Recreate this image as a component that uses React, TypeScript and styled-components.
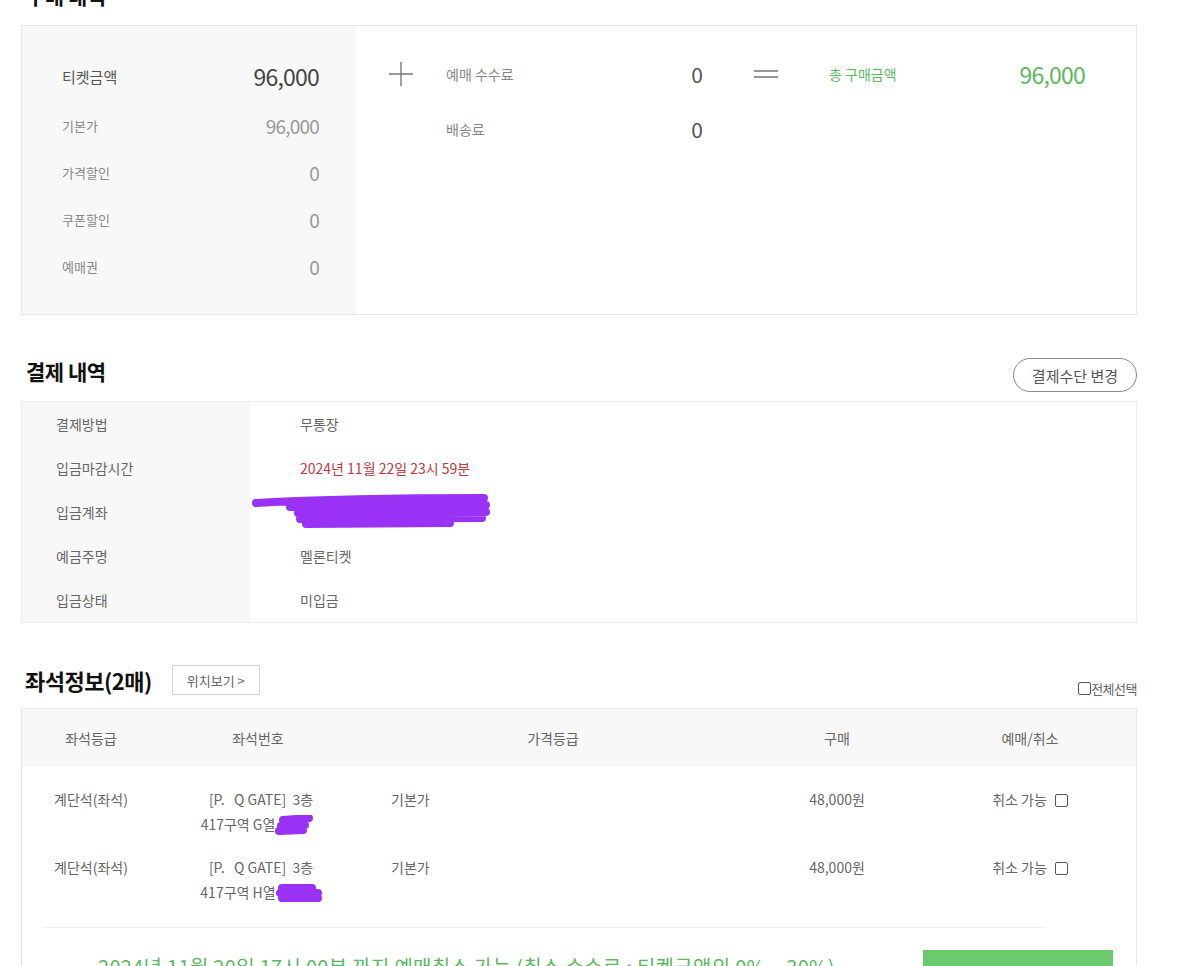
import React from "react";
import styled, { createGlobalStyle } from "styled-components";

const GlobalStyle = createGlobalStyle`
  * { box-sizing: border-box; }
  body {
    margin: 0;
    background: #fff;
    font-family: "Noto Sans CJK KR", "Noto Sans", sans-serif;
    color: #666;
  }
`;

const GREEN = "#5cb85f";

const Page = styled.div`
  width: 1116px;
  margin: -18px 0 0 21px;
`;

const SectionHeader = styled.div<{ $gap?: number }>`
  display: flex;
  align-items: flex-start;
  justify-content: space-between;
  height: 43px;
  margin-top: ${({ $gap }) => $gap ?? 0}px;
`;

const HeadLeft = styled.div`
  display: flex;
  align-items: center;
  gap: 20px;
`;

const Heading = styled.h2<{ $size?: number }>`
  margin: 0;
  padding-left: 5px;
  font-size: ${({ $size }) => $size ?? 21}px;
  line-height: 26px;
  font-weight: 700;
  color: #111;
  letter-spacing: -0.5px;
`;

const PillButton = styled.button`
  height: 34px;
  padding: 0 18px;
  border: 1px solid #8a8a8a;
  border-radius: 17px;
  background: #fff;
  font-family: inherit;
  font-size: 15px;
  color: #555;
`;

const BoxButton = styled.button`
  height: 30px;
  padding: 0 14px;
  border: 1px solid #d4d4d4;
  background: #fff;
  font-family: inherit;
  font-size: 13px;
  color: #666;
`;

/* 구매 내역 */
const SummaryBox = styled.div`
  display: flex;
  height: 290px;
  border: 1px solid #e6e6e6;
`;

const DiscountPanel = styled.div`
  width: 334px;
  background: #f8f8f8;
  padding: 24px 37px 0 40px;
`;

const AmountRow = styled.div<{ $lead?: boolean }>`
  display: flex;
  align-items: center;
  justify-content: space-between;
  height: ${({ $lead }) => ($lead ? 52 : 47)}px;
`;

const AmountLabel = styled.span<{ $lead?: boolean }>`
  font-size: ${({ $lead }) => ($lead ? 15 : 13)}px;
  color: ${({ $lead }) => ($lead ? "#555" : "#888")};
`;

const AmountValue = styled.span<{ $lead?: boolean }>`
  font-size: ${({ $lead }) => ($lead ? 23 : 19)}px;
  color: ${({ $lead }) => ($lead ? "#444" : "#999")};
  letter-spacing: -0.8px;
`;

const Operator = styled.div<{ $w: number }>`
  width: ${({ $w }) => $w}px;
  padding-top: 20px;
  height: 75px;
  display: flex;
  align-items: center;
  justify-content: center;
`;

const SumColumn = styled.div`
  width: 256px;
  padding-top: 20px;
`;

const SumRow = styled.div`
  display: flex;
  align-items: center;
  justify-content: space-between;
  height: 55px;
`;

const SumLabel = styled.span<{ $green?: boolean }>`
  font-size: 14px;
  color: ${({ $green }) => ($green ? GREEN : "#888")};
`;

const SumValue = styled.span<{ $green?: boolean }>`
  font-size: ${({ $green }) => ($green ? 23 : 21)}px;
  color: ${({ $green }) => ($green ? GREEN : "#555")};
  letter-spacing: -0.8px;
`;

/* 결제 내역 */
const InfoBox = styled.div`
  border: 1px solid #ececec;
`;

const InfoRow = styled.div`
  display: grid;
  grid-template-columns: 228px 1fr;
  height: 44px;
`;

const InfoLabel = styled.div`
  display: flex;
  align-items: center;
  padding-left: 34px;
  background: #f8f8f8;
  font-size: 14px;
  color: #666;
`;

const InfoValue = styled.div<{ $red?: boolean; $flush?: boolean }>`
  display: flex;
  align-items: center;
  padding-left: ${({ $flush }) => ($flush ? 0 : 50)}px;
  font-size: 14px;
  color: ${({ $red }) => ($red ? "#c0393b" : "#666")};
`;

/* 좌석정보 */
const SeatHeading = styled(Heading)`
  line-height: 30px;
  padding-left: 4px;
`;

const SelectAll = styled.label`
  display: flex;
  align-items: center;
  margin-top: 14px;
  font-size: 13px;
  color: #666;
  letter-spacing: -0.5px;
`;

const Check = styled.span<{ $ml?: number }>`
  display: inline-block;
  width: 13px;
  height: 13px;
  border: 1px solid #555;
  border-radius: 2px;
  margin-left: ${({ $ml }) => $ml ?? 0}px;
  vertical-align: ${({ $ml }) => ($ml ? "-2px" : "baseline")};
`;

const SeatBox = styled.div`
  border: 1px solid #e6e6e6;
  border-bottom: none;
`;

const SeatGrid = styled.div<{ $head?: boolean }>`
  display: grid;
  grid-template-columns: 138px 196px 394px 174px 1fr;
  align-items: ${({ $head }) => ($head ? "center" : "start")};
  height: ${({ $head }) => ($head ? 58 : 68)}px;
  padding-top: ${({ $head }) => ($head ? 0 : 20)}px;
  background: ${({ $head }) => ($head ? "#f8f8f8" : "#fff")};
  font-size: 14px;
  line-height: 25px;
  color: #666;
`;

const Cell = styled.div<{ $left?: boolean }>`
  text-align: ${({ $left }) => ($left ? "left" : "center")};
  padding-left: ${({ $left }) => ($left ? 35 : 0)}px;
  white-space: nowrap;
`;

const SeatLine = styled.div`
  display: flex;
  align-items: center;
  justify-content: center;
  padding-left: 6px;
`;

const Divider = styled.hr`
  border: none;
  border-top: 1px solid #f0f0f0;
  margin: 24px 90px 0 21px;
`;

const Notice = styled.div`
  display: flex;
  justify-content: space-between;
  padding: 22px 23px 0 76px;
`;

const NoticeText = styled.p`
  margin: 2px 0 0;
  font-size: 20px;
  letter-spacing: 0.3px;
  color: ${GREEN};
  white-space: nowrap;
`;

const GreenButton = styled.button`
  width: 190px;
  height: 50px;
  border: none;
  background: #6bca6e;
`;

const PlusIcon = () => (
  <svg width="26" height="26" viewBox="0 0 26 26">
    <path d="M13 1v24M1 13h24" stroke="#777" strokeWidth="1.4" />
  </svg>
);

const EqualsIcon = () => (
  <svg width="26" height="12" viewBox="0 0 26 12">
    <path d="M1 3h24M1 9h24" stroke="#777" strokeWidth="1.4" />
  </svg>
);

const Scribble: React.FC<{ d: string; w: number; h: number }> = ({ d, w, h }) => (
  <svg width={w} height={h} viewBox={`0 0 ${w} ${h}`}>
    <path d={d} stroke="#9932f5" strokeWidth="8" strokeLinecap="round" strokeLinejoin="round" fill="none" />
  </svg>
);

const discounts = [
  { label: "기본가", value: "96,000" },
  { label: "가격할인", value: "0" },
  { label: "쿠폰할인", value: "0" },
  { label: "예매권", value: "0" },
];

const seats = [
  { row: "G열", scribble: "M8 5 L34 3 M6 11 L30 10 M4 16 L28 15" },
  { row: "H열", scribble: "M6 5 L36 5 M4 10 L42 10 M6 15 L42 15" },
];

export default function App() {
  return (
    <Page>
      <GlobalStyle />

      <SectionHeader>
        <Heading>구매 내역</Heading>
      </SectionHeader>
      <SummaryBox>
        <DiscountPanel>
          <AmountRow $lead>
            <AmountLabel $lead>티켓금액</AmountLabel>
            <AmountValue $lead>96,000</AmountValue>
          </AmountRow>
          {discounts.map((d) => (
            <AmountRow key={d.label}>
              <AmountLabel>{d.label}</AmountLabel>
              <AmountValue>{d.value}</AmountValue>
            </AmountRow>
          ))}
        </DiscountPanel>
        <Operator $w={90}>
          <PlusIcon />
        </Operator>
        <SumColumn>
          <SumRow>
            <SumLabel>예매 수수료</SumLabel>
            <SumValue>0</SumValue>
          </SumRow>
          <SumRow>
            <SumLabel>배송료</SumLabel>
            <SumValue>0</SumValue>
          </SumRow>
        </SumColumn>
        <Operator $w={127}>
          <EqualsIcon />
        </Operator>
        <SumColumn>
          <SumRow>
            <SumLabel $green>총 구매금액</SumLabel>
            <SumValue $green>96,000</SumValue>
          </SumRow>
        </SumColumn>
      </SummaryBox>

      <SectionHeader $gap={43}>
        <Heading>결제 내역</Heading>
        <PillButton>결제수단 변경</PillButton>
      </SectionHeader>
      <InfoBox>
        <InfoRow>
          <InfoLabel>결제방법</InfoLabel>
          <InfoValue>무통장</InfoValue>
        </InfoRow>
        <InfoRow>
          <InfoLabel>입금마감시간</InfoLabel>
          <InfoValue $red>2024년 11월 22일 23시 59분</InfoValue>
        </InfoRow>
        <InfoRow>
          <InfoLabel>입금계좌</InfoLabel>
          <InfoValue $flush>
            <Scribble
              w={244}
              h={40}
              d="M6 11 C60 8 140 6 234 6 M40 15 L236 13 M48 21 L236 20 M50 27 L232 26 M56 32 L200 31"
            />
          </InfoValue>
        </InfoRow>
        <InfoRow>
          <InfoLabel>예금주명</InfoLabel>
          <InfoValue>멜론티켓</InfoValue>
        </InfoRow>
        <InfoRow>
          <InfoLabel>입금상태</InfoLabel>
          <InfoValue>미입금</InfoValue>
        </InfoRow>
      </InfoBox>

      <SectionHeader $gap={42}>
        <HeadLeft>
          <SeatHeading $size={22}>좌석정보(2매)</SeatHeading>
          <BoxButton>위치보기 &gt;</BoxButton>
        </HeadLeft>
        <SelectAll>
          <Check />
          전체선택
        </SelectAll>
      </SectionHeader>
      <SeatBox>
        <SeatGrid $head>
          <Cell>좌석등급</Cell>
          <Cell>좌석번호</Cell>
          <Cell>가격등급</Cell>
          <Cell>구매</Cell>
          <Cell>예매/취소</Cell>
        </SeatGrid>
        {seats.map((s) => (
          <SeatGrid key={s.row}>
            <Cell>계단석(좌석)</Cell>
            <Cell>
              <SeatLine>[P.&nbsp;&nbsp;&nbsp;Q GATE]&nbsp;&nbsp;3층</SeatLine>
              <SeatLine>
                417구역 {s.row}
                <Scribble w={46} h={20} d={s.scribble} />
              </SeatLine>
            </Cell>
            <Cell $left>기본가</Cell>
            <Cell>48,000원</Cell>
            <Cell>
              취소 가능
              <Check $ml={8} />
            </Cell>
          </SeatGrid>
        ))}
        <Divider />
        <Notice>
          <NoticeText>2024년 11월 20일 17시 00분 까지 예매취소 가능 (취소 수수료 : 티켓금액의 0% ~ 30%)</NoticeText>
          <GreenButton />
        </Notice>
      </SeatBox>
    </Page>
  );
}
